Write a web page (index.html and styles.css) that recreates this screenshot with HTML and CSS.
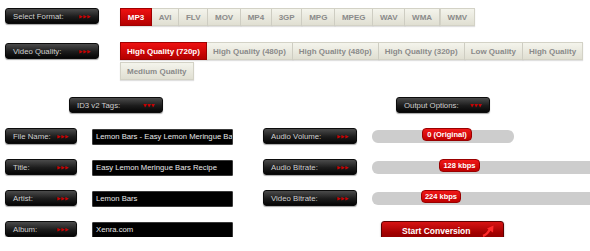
FILE: index.html
```html
<!DOCTYPE html>
<html lang="en">
<head>
  <meta charset="UTF-8" />
  <title>Converter</title>
  <link rel="stylesheet" href="styles.css">
</head>
<body>
  <div class="opt-row">
    <div class="tag wide"><span>Select Format:</span><i>▶▶▶</i></div>
    <div class="tabs formats">
      <span class="tab active">MP3</span>
      <span class="tab">AVI</span>
      <span class="tab">FLV</span>
      <span class="tab">MOV</span>
      <span class="tab">MP4</span>
      <span class="tab">3GP</span>
      <span class="tab">MPG</span>
      <span class="tab">MPEG</span>
      <span class="tab">WAV</span>
      <span class="tab">WMA</span>
      <span class="tab">WMV</span>
    </div>
  </div>

  <div class="opt-row second">
    <div class="tag wide"><span>Video Quality:</span><i>▶▶▶</i></div>
    <div class="tabs">
      <span class="tab active">High Quality (720p)</span>
      <span class="tab">High Quality (480p)</span>
      <span class="tab">High Quality (480p)</span>
      <span class="tab">High Quality (320p)</span>
      <span class="tab">Low Quality</span>
      <span class="tab">High Quality</span>
      <span class="tab">Medium Quality</span>
    </div>
  </div>

  <div class="fields">
    <div class="tag wide head-left"><span>ID3 v2 Tags:</span><i>▼▼▼</i></div>
    <div class="tag wide head-right"><span>Output Options:</span><i>▼▼▼</i></div>

    <div class="tag"><span>File Name:</span><i>▶▶▶</i></div>
    <div class="field">Lemon Bars - Easy Lemon Meringue Ba</div>
    <div class="tag wide"><span>Audio Volume:</span><i>▶▶▶</i></div>
    <div class="track short"><span class="thumb" style="left:50px;width:50px">0 (Original)</span></div>

    <div class="tag"><span>Title:</span><i>▶▶▶</i></div>
    <div class="field">Easy Lemon Meringue Bars Recipe</div>
    <div class="tag wide"><span>Audio Bitrate:</span><i>▶▶▶</i></div>
    <div class="track"><span class="thumb" style="left:67px;width:41px">128 kbps</span></div>

    <div class="tag"><span>Artist:</span><i>▶▶▶</i></div>
    <div class="field">Lemon Bars</div>
    <div class="tag wide"><span>Video Bitrate:</span><i>▶▶▶</i></div>
    <div class="track"><span class="thumb" style="left:49px;width:40px">224 kbps</span></div>

    <div class="tag"><span>Album:</span><i>▶▶▶</i></div>
    <div class="field">Xenra.com</div>
    <button class="start">
      Start Conversion
      <svg width="13" height="12" viewBox="0 0 13 12">
        <path d="M1 11 C4 10 6 8 8 4" fill="none" stroke="#ff2a2a" stroke-width="2.4"/>
        <path d="M5 3.5 L11.5 0.5 L11 7.5 Z" fill="#ff2a2a"/>
      </svg>
    </button>
  </div>
</body>
</html>
```

FILE: styles.css
```css
body {
  font-family: 'Liberation Sans', Arial, sans-serif;
  background: #fff;
  margin: 0;
  padding: 8px 0 0 5px;
  overflow: hidden;
}
.opt-row {
  display: flex;
  align-items: flex-start;
}
.opt-row.second {
  margin-top: 16px;
}
.opt-row.second .tag {
  margin-top: 1px;
}
.opt-row .tag {
  margin-right: 21px;
}
.tag {
  box-sizing: border-box;
  width: 72px;
  height: 16px;
  padding: 0 7px;
  display: flex;
  align-items: center;
  justify-content: space-between;
  background: linear-gradient(to bottom, #4b4b4b, #1c1c1c 55%, #050505);
  border: 1px solid #0c0c0c;
  border-radius: 3px;
  box-shadow: 0 1px 1px rgba(0,0,0,0.35);
  color: #cfcfcf;
  font-size: 7.8px;
  flex-shrink: 0;
}
.tag.wide {
  width: 94px;
}
.tag i {
  font-style: normal;
  font-family: 'DejaVu Sans', sans-serif;
  font-size: 4.5px;
  letter-spacing: 0.5px;
  color: #c80000;
}
.tabs {
  display: flex;
  flex-wrap: wrap;
  row-gap: 2px;
  max-width: 470px;
}
.tab {
  box-sizing: border-box;
  height: 18px;
  padding: 0 6px;
  display: flex;
  align-items: center;
  background: linear-gradient(to bottom, #f4f4ec, #e0dfd2);
  border: 1px solid #d3d2c6;
  border-left: none;
  color: #8a8a8a;
  font-size: 8px;
  font-weight: bold;
  box-shadow: 0 1px 1px rgba(0,0,0,0.12);
}
.formats .tab {
  padding: 0 6.75px;
}
.tab:first-child,
.tab:last-child {
  border-left: 1px solid #d3d2c6;
}
.tab.active {
  background: linear-gradient(to bottom, #ee1111, #b30000);
  border-color: #a00000;
  color: #fff;
}
.fields {
  margin-top: 17px;
  display: grid;
  grid-template-columns: 72px 156px 94px 300px;
  grid-auto-rows: 16px;
  column-gap: 15px;
  row-gap: 15px;
  align-items: start;
}
.head-left {
  grid-column: 1 / 3;
  margin-left: 64px;
}
.head-right {
  grid-column: 3 / 5;
  margin-left: 133px;
}
.field {
  box-sizing: border-box;
  width: 141px;
  height: 16px;
  margin-top: 1px;
  padding: 0 3px;
  background: #000;
  border: 1px solid #3a3a3a;
  border-radius: 1px;
  color: #e8e8e8;
  font-size: 7.7px;
  line-height: 14px;
  white-space: nowrap;
  overflow: hidden;
}
.track {
  position: relative;
  height: 13px;
  margin-top: 2px;
  background: #cdcdcd;
  border-radius: 6px;
}
.track.short {
  width: 142px;
}
.thumb {
  position: absolute;
  top: -2px;
  box-sizing: border-box;
  height: 13px;
  background: linear-gradient(to bottom, #f01818, #c00000);
  border: 1px solid #9a0000;
  border-radius: 4px;
  color: #fff;
  font-size: 7.5px;
  font-weight: bold;
  display: flex;
  align-items: center;
  justify-content: center;
}
.start {
  grid-column: 3 / 5;
  margin-left: 118px;
  width: 123px;
  height: 20px;
  padding: 0 8px 0 20px;
  display: flex;
  align-items: center;
  justify-content: space-between;
  background: linear-gradient(to bottom, #d81414, #a30000 60%, #8a0000);
  border: 1px solid #5e0000;
  border-radius: 3px;
  box-shadow: 0 1px 2px rgba(0,0,0,0.35);
  color: #fff;
  font-family: 'Liberation Sans', Arial, sans-serif;
  font-size: 8.5px;
  font-weight: bold;
}
```
